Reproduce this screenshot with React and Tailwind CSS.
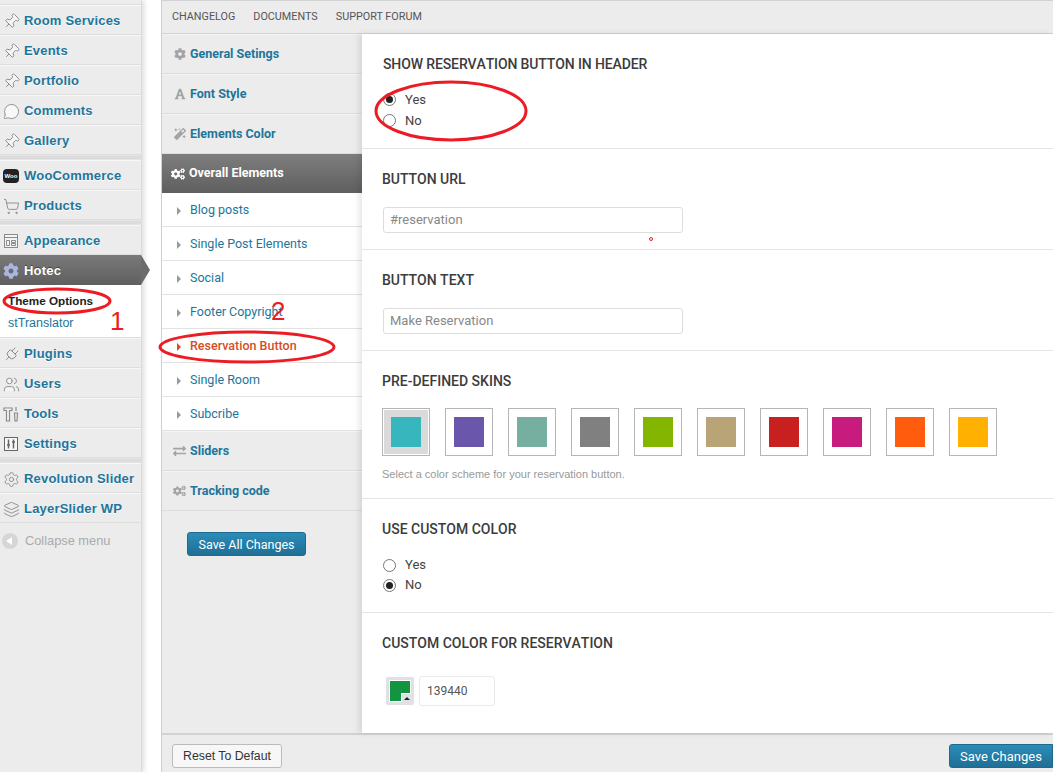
import { Pin, MessageCircle, ShoppingCart, Settings, Plug, Users, Layers } from "lucide-react";
import { FaCog, FaFont, FaMagic, FaCogs, FaExchangeAlt } from "react-icons/fa";

const Separator = () => <div className="h-[5px] bg-[#dcdcdc] border-y border-[#e4e4e4]" />;

const MenuItem = ({ icon: Icon, label }) => (
  <div className="h-[30px] flex items-center pt-[2px] border-t border-t-[#f7f7f7] border-b border-b-[#dedede]">
    <div className="w-[24px] pr-[2px] flex justify-center shrink-0">
      <Icon size={17} strokeWidth={1.3} className="text-[#8a8a8a]" />
    </div>
    <span className="text-[13px] tracking-[0.2px] font-bold text-[#21759b] whitespace-nowrap [text-shadow:0_1px_0_#fff]">{label}</span>
  </div>
);

const PinIcon = (props) => <Pin {...props} fill="#f4f4f4" className="text-[#8a8a8a] rotate-45" />;
const PlugIcon = (props) => <Plug {...props} className="text-[#8a8a8a] rotate-45" />;
const BubbleIcon = (props) => <MessageCircle {...props} fill="#f8f8f8" />;
const UsersIcon = (props) => <Users {...props} fill="#f4f4f4" />;

const WooIcon = () => (
  <div className="w-[16px] h-[14px] rounded-sm bg-[#222] text-white text-[6px] font-bold flex items-center justify-center">Woo</div>
);

const AppearanceIcon = () => (
  <svg width="16" height="16" viewBox="0 0 16 16" fill="none" stroke="#8a8a8a">
    <rect x="1.5" y="1.5" width="13" height="13" fill="#f4f4f4" />
    <path d="M1.5 4.5h13M3.5 7.5h3v5h-3zM8.5 7.5h4v2h-4zM8.5 10.5h4v2h-4z" />
  </svg>
);

const ToolsIcon = () => (
  <svg width="17" height="17" viewBox="0 0 17 17" fill="none" stroke="#8a8a8a" strokeWidth="1.2">
    <path d="M1 2h8v2.5H6.5V15h-3V4.5H1z" fill="#f4f4f4" />
    <path d="M13 1v4M11.5 7h3l-.5 8h-2z" fill="#f4f4f4" />
  </svg>
);

const SettingsIcon = () => (
  <svg width="16" height="16" viewBox="0 0 16 16" fill="none" stroke="#666">
    <rect x="1.5" y="1.5" width="13" height="13" fill="#f8f8f8" />
    <path d="M5.5 3.5v9M10.5 3.5v9M4 9h3M9 6h3" strokeWidth="1.5" />
  </svg>
);

const AdminMenu = () => (
  <aside className="w-[142px] shrink-0 bg-[#ececec] border-r border-[#dcdcdc] shadow-[2px_0_5px_rgba(0,0,0,0.14)] relative font-['Liberation_Sans',sans-serif]">
    <div className="h-[5px] border-b border-[#dedede]" />
    <MenuItem icon={PinIcon} label="Room Services" />
    <MenuItem icon={PinIcon} label="Events" />
    <MenuItem icon={PinIcon} label="Portfolio" />
    <MenuItem icon={BubbleIcon} label="Comments" />
    <MenuItem icon={PinIcon} label="Gallery" />
    <Separator />
    <MenuItem icon={WooIcon} label="WooCommerce" />
    <MenuItem icon={ShoppingCart} label="Products" />
    <Separator />
    <MenuItem icon={AppearanceIcon} label="Appearance" />
    <div className="h-[30px] flex items-center pt-[1px] bg-gradient-to-b from-[#7a7a7a] to-[#5f5f5f] relative">
      <div className="w-[24px] pr-[2px] flex justify-center shrink-0">
        <FaCog size={16} className="text-[#a9b6e0]" />
      </div>
      <span className="text-[13px] tracking-[0.2px] font-bold text-white [text-shadow:0_-1px_0_#444]">Hotec</span>
      <div className="absolute left-full top-0 w-0 h-0 border-y-[15px] border-y-transparent border-l-[9px] border-l-[#6c6c6c]" />
    </div>
    <div className="h-[53px] bg-white border-b border-[#dcdcdc] pl-[8px] pt-[5px] leading-[22px]">
      <div className="text-[11.7px] font-bold text-[#222]">Theme Options</div>
      <div className="text-[12.5px] text-[#21759b]">stTranslator</div>
    </div>
    <MenuItem icon={PlugIcon} label="Plugins" />
    <MenuItem icon={UsersIcon} label="Users" />
    <MenuItem icon={ToolsIcon} label="Tools" />
    <MenuItem icon={SettingsIcon} label="Settings" />
    <Separator />
    <MenuItem icon={Settings} label="Revolution Slider" />
    <MenuItem icon={Layers} label="LayerSlider WP" />
    <div className="h-[34px] flex items-center pt-[2px]">
      <div className="w-[24px] pr-[4px] flex justify-center shrink-0">
        <div className="w-[16px] h-[16px] rounded-full bg-[#d6d6d6] flex items-center justify-center">
          <span className="w-0 h-0 mr-[2px] border-y-[4px] border-y-transparent border-r-[6px] border-r-white" />
        </div>
      </div>
      <span className="pl-[1px] text-[12.8px] text-[#aaa]">Collapse menu</span>
    </div>
  </aside>
);

const MainTab = ({ icon: Icon, label, size = 12 }) => (
  <div className="h-[40px] flex items-center pl-[11px] gap-[4px] border-b border-[#dcdcdc] border-t border-t-[#f4f4f4]">
    <span className="w-[13px] flex justify-center"><Icon size={size} className="text-[#a3a3a3]" /></span>
    <span className="text-[12.5px] font-bold text-[#21759b]">{label}</span>
  </div>
);

const SubTab = ({ label, active }) => (
  <div className={`h-[34px] flex items-center pt-[2px] bg-white border-b border-[#e2e2e2] pl-[15px] gap-[9px] text-[12.5px] ${active ? "text-[#d54e21]" : "text-[#21759b]"}`}>
    <span className={`w-0 h-0 border-y-[4px] border-y-transparent border-l-[4px] ${active ? "border-l-[#d54e21]" : "border-l-[#999]"}`} />
    <span className={active ? "font-medium" : ""}>{label}</span>
  </div>
);

const ThemeTabs = () => (
  <div className="w-[200px] shrink-0 bg-[#ececec]">
    <MainTab icon={FaCog} label="General Setings" />
    <MainTab icon={FaFont} label="Font Style" />
    <MainTab icon={FaMagic} label="Elements Color" />
    <div className="h-[39px] flex items-center pl-[9px] gap-[4px] bg-gradient-to-b from-[#7e7e7e] to-[#5f5f5f] text-white">
      <FaCogs size={14} />
      <span className="text-[12.5px] font-bold">Overall Elements</span>
    </div>
    <SubTab label="Blog posts" />
    <SubTab label="Single Post Elements" />
    <SubTab label="Social" />
    <SubTab label="Footer Copyright" />
    <SubTab label="Reservation Button" active />
    <SubTab label="Single Room" />
    <SubTab label="Subcribe" />
    <MainTab icon={FaExchangeAlt} label="Sliders" size={14} />
    <MainTab icon={FaCogs} label="Tracking code" size={14} />
    <div className="pl-[25px] pt-[21px]">
      <div className="w-[119px] h-[24px] pt-[2px] rounded-[3px] bg-gradient-to-b from-[#2a8db8] to-[#1f6f96] border border-[#1c6a8f] text-white text-[12.5px] flex items-center justify-center">
        Save All Changes
      </div>
    </div>
  </div>
);

const Radio = ({ label, checked, tight }) => (
  <div className={`flex items-center gap-[9px] text-[13px] text-[#444] ${tight ? "h-[20px]" : "h-[21px]"}`}>
    <span className="w-[13px] h-[13px] rounded-full border border-[#777] bg-white flex items-center justify-center">
      {checked && <span className="w-[7px] h-[7px] rounded-full bg-[#222]" />}
    </span>
    {label}
  </div>
);

const Heading = ({ children, className = "" }) => (
  <h3 className={`text-[14px] leading-[18px] font-medium text-[#3c3c3c] uppercase [font-kerning:none] ${className}`}>{children}</h3>
);

const TextField = ({ value }) => (
  <div className="w-[300px] h-[26px] mt-[19px] ml-px border border-[#ddd] rounded-[3px] px-[6px] flex items-center text-[13px] text-[#888]">
    {value}
  </div>
);

const skins = ["#37b6bd", "#6a57ab", "#76ae9f", "#808080", "#84b500", "#b8a477", "#c8201e", "#c81b7e", "#ff5c0e", "#ffb000"];

const Content = () => (
  <div className="flex-1 bg-white shadow-[-3px_0_6px_rgba(0,0,0,0.1)] relative">
    <section className="h-[115px] pl-[21px] pt-[21px] border-b border-[#e4e4e4]">
      <Heading className="tracking-[-0.12px]">Show reservation button in header</Heading>
      <div className="mt-[16px]">
        <Radio label="Yes" checked />
        <Radio label="No" />
      </div>
    </section>
    <section className="h-[101px] pl-[20px] pt-[21px] border-b border-[#e4e4e4]">
      <Heading>Button URL</Heading>
      <TextField value="#reservation" />
    </section>
    <section className="h-[101px] pl-[20px] pt-[21px] border-b border-[#e4e4e4]">
      <Heading>Button Text</Heading>
      <TextField value="Make Reservation" />
    </section>
    <section className="h-[148px] pl-[20px] pt-[21px] border-b border-[#e4e4e4]">
      <Heading>Pre-defined skins</Heading>
      <div className="flex gap-[15px] mt-[18px]">
        {skins.map((color, i) => (
          <div key={color} className={`w-[48px] h-[48px] border border-[#b5b5b5] flex items-center justify-center ${i === 0 ? "bg-[#dadada] outline outline-1 -outline-offset-2 outline-white" : "bg-white"}`}>
            <div className="w-[30px] h-[30px]" style={{ backgroundColor: color }} />
          </div>
        ))}
      </div>
      <p className="text-[11px] text-[#999] mt-[10px] font-['Liberation_Sans',sans-serif]">Select a color scheme for your reservation button.</p>
    </section>
    <section className="h-[114px] pl-[20px] pt-[21px] border-b border-[#e4e4e4]">
      <Heading>Use custom color</Heading>
      <div className="mt-[17px] ml-px">
        <Radio label="Yes" tight />
        <Radio label="No" checked tight />
      </div>
    </section>
    <section className="h-[120px] pl-[20px] pt-[21px]">
      <Heading>Custom color for reservation</Heading>
      <div className="flex items-center gap-[5px] mt-[24px] ml-[4px]">
        <div className="w-[28px] h-[28px] rounded-[2px] bg-[#dfe1e4] p-[3px]">
          <div className="w-full h-full bg-[#139440] border border-white relative">
            <div className="absolute right-[-1px] bottom-[-1px] w-[10px] h-[9px] bg-[#dfe1e4] border-l border-t border-white flex items-center justify-center">
              <span className="w-0 h-0 border-x-[3px] border-x-transparent border-b-[3px] border-b-[#222]" />
            </div>
          </div>
        </div>
        <div className="w-[76px] h-[30px] border border-[#eaeaea] rounded-[3px] px-[7px] flex items-center text-[12px] text-[#555]">139440</div>
      </div>
    </section>
  </div>
);

export default function App() {
  return (
    <div className="relative w-[1053px] h-[772px] overflow-hidden bg-white flex font-['Roboto',sans-serif]">
      <AdminMenu />
      <main className="ml-[19px] flex-1 flex flex-col border-l border-[#cfcfcf] bg-[#ececec]">
        <nav className="h-[34px] shrink-0 flex items-center gap-[18px] pl-[10px] pt-[1px] border-y border-[#d2d2d2] text-[10.8px] text-[#555] uppercase">
          <span>Changelog</span>
          <span>Documents</span>
          <span>Support Forum</span>
        </nav>
        <div className="h-[699px] shrink-0 flex">
          <ThemeTabs />
          <Content />
        </div>
        <footer className="h-[39px] shrink-0 border-t-2 border-[#d2d2d2] flex items-start justify-between pl-[10px] pt-[9px]">
          <div className="w-[110px] h-[24px] pt-[1px] bg-[#f7f7f7] border border-[#bbb] rounded-[3px] text-[12.3px] text-[#333] flex items-center justify-center font-['Liberation_Sans',sans-serif]">Reset To Defaut</div>
          <div className="w-[104px] h-[24px] pt-[1px] bg-gradient-to-b from-[#2a8db8] to-[#1f6f96] border border-[#1c6a8f] rounded-l-[3px] text-[13px] text-white flex items-center justify-center">Save Changes</div>
        </footer>
      </main>
      <svg className="absolute inset-0 pointer-events-none" width="1053" height="772" fill="none" stroke="#ed1c24" strokeWidth="3">
        <ellipse cx="57" cy="301" rx="53" ry="12" />
        <ellipse cx="247" cy="347" rx="87" ry="15" />
        <ellipse cx="451" cy="111" rx="75" ry="29" />
        <circle cx="651" cy="239" r="1.5" strokeWidth="1" />
      </svg>
      <span className="absolute left-[110px] top-[306px] text-[26px] leading-[30px] text-[#ed1c24] font-['Liberation_Sans',sans-serif]">1</span>
      <span className="absolute left-[271px] top-[296px] text-[26px] leading-[30px] text-[#ed1c24] font-['Liberation_Sans',sans-serif]">2</span>
    </div>
  );
}
